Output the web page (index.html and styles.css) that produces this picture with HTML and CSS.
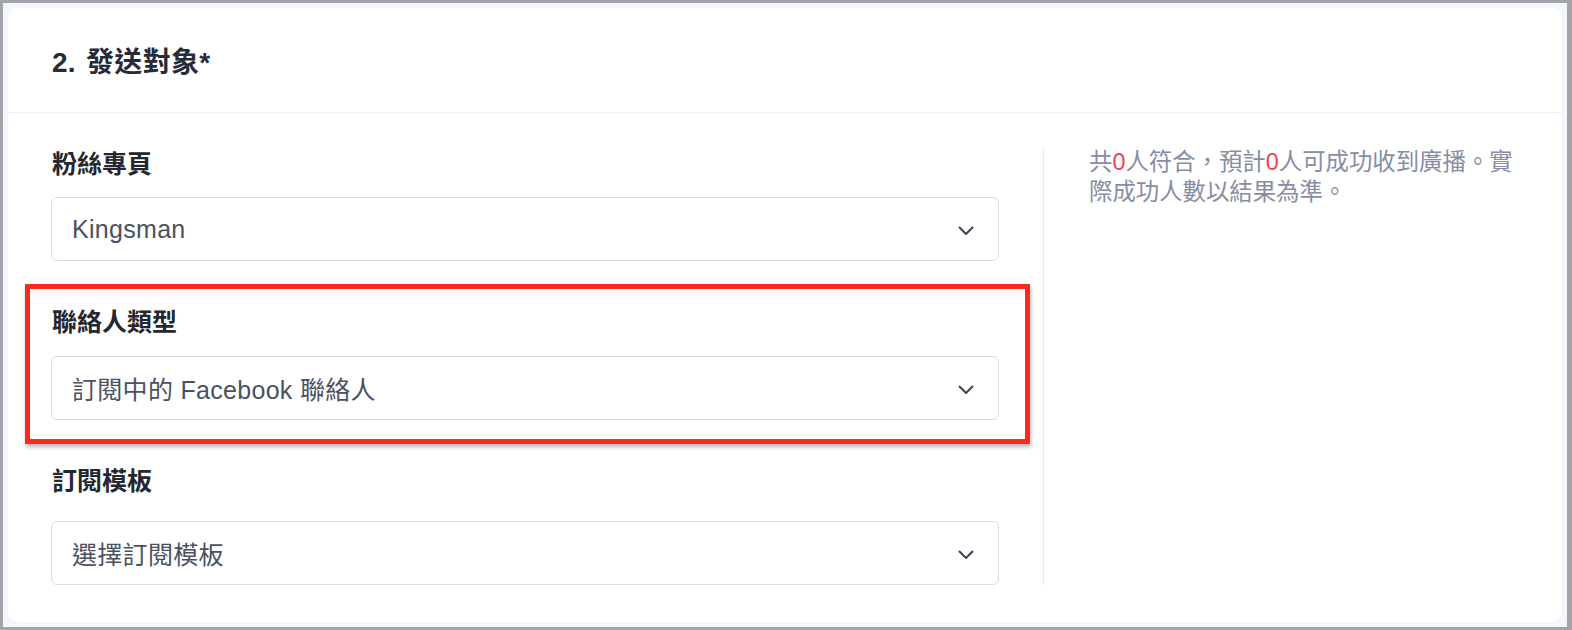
FILE: index.html
```html
<!DOCTYPE html>
<html lang="zh-Hant">
<head>
  <meta charset="UTF-8">
  <title>發送對象</title>
  <meta name="viewport" content="width=device-width, initial-scale=1.0">
  <link rel="stylesheet" href="styles.css">
</head>
<body>

<div class="frame">
  <section class="card">
    <header class="card-header">
      <h2>2. 發送對象*</h2>
    </header>

    <div class="card-body">
      <div class="fields">
        <div class="field">
          <label>粉絲專頁</label>
          <div class="select">
            <span>Kingsman</span>
            <svg class="chevron" width="16" height="10" viewBox="0 0 16 10"><path d="M1.5 1.5 L8 8 L14.5 1.5" fill="none" stroke="#3c4350" stroke-width="2" stroke-linecap="round" stroke-linejoin="round"/></svg>
          </div>
        </div>

        <div class="field highlight">
          <label>聯絡人類型</label>
          <div class="select">
            <span>訂閱中的 Facebook 聯絡人</span>
            <svg class="chevron" width="16" height="10" viewBox="0 0 16 10"><path d="M1.5 1.5 L8 8 L14.5 1.5" fill="none" stroke="#3c4350" stroke-width="2" stroke-linecap="round" stroke-linejoin="round"/></svg>
          </div>
        </div>

        <div class="field field-template">
          <label>訂閱模板</label>
          <div class="select">
            <span>選擇訂閱模板</span>
            <svg class="chevron" width="16" height="10" viewBox="0 0 16 10"><path d="M1.5 1.5 L8 8 L14.5 1.5" fill="none" stroke="#3c4350" stroke-width="2" stroke-linecap="round" stroke-linejoin="round"/></svg>
          </div>
        </div>
      </div>

      <aside class="summary">
        <p>共<span class="count">0</span>人符合，預計<span class="count">0</span>人可成功收到廣播。實際成功人數以結果為準。</p>
      </aside>
    </div>
  </section>
</div>

</body>
</html>
```

FILE: styles.css
```css
* {
  box-sizing: border-box;
}
html, body {
  margin: 0;
  height: 630px;
}
body {
  font-family: 'Liberation Sans', 'Noto Sans CJK TC', sans-serif;
  background-color: #a3a4a9;
  padding: 3px 5px 3px 3px;
  overflow: hidden;
}
.frame {
  background-color: #f3f6fb;
  padding: 5px;
  height: 624px;
}
.card {
  background-color: #fff;
  border-radius: 10px;
  height: 614px;
}
.card-header {
  height: 105px;
  padding-left: 44px;
  border-bottom: 1px solid #eceef2;
  display: flex;
  align-items: center;
}
.card-header h2 {
  margin: 0;
  font-size: 28px;
  font-weight: 700;
  color: #262b36;
  letter-spacing: 0.3px;
  word-spacing: 2px;
}
.card-body {
  display: flex;
  padding: 34px 43px 37px 43px;
}
.fields {
  width: 948px;
  flex-shrink: 0;
}
.field {
  position: relative;
  margin-top: 44px;
}
.field:first-child {
  margin-top: 0;
}
.field label {
  display: block;
  font-size: 25px;
  line-height: 34px;
  font-weight: 700;
  color: #24272e;
  margin-bottom: 16px;
  padding-left: 1px;
}
.field.highlight label {
  margin-bottom: 17px;
}
.field-template label {
  margin-bottom: 23px;
}
.select {
  height: 64px;
  border: 1px solid #d9dce6;
  border-radius: 6px;
  padding: 0 24px 0 20px;
  display: flex;
  align-items: center;
  justify-content: space-between;
  font-size: 25px;
  color: #4a5162;
  letter-spacing: 0.3px;
}
.chevron {
  margin-top: 3px;
}
.highlight::before {
  content: "";
  position: absolute;
  left: -26px;
  right: -31px;
  top: -21px;
  bottom: -24px;
  border: 5px solid #fa2b1d;
  box-shadow: 1px 3px 4px rgba(0,0,0,0.28);
  pointer-events: none;
}
.summary {
  flex: 1;
  margin-left: 44px;
  border-left: 1px solid #e8eaee;
  padding-left: 45px;
}
.summary p {
  margin: 0;
  font-size: 23.4px;
  line-height: 30px;
  color: #878da3;
}
.count {
  color: #f5414c;
}
```
